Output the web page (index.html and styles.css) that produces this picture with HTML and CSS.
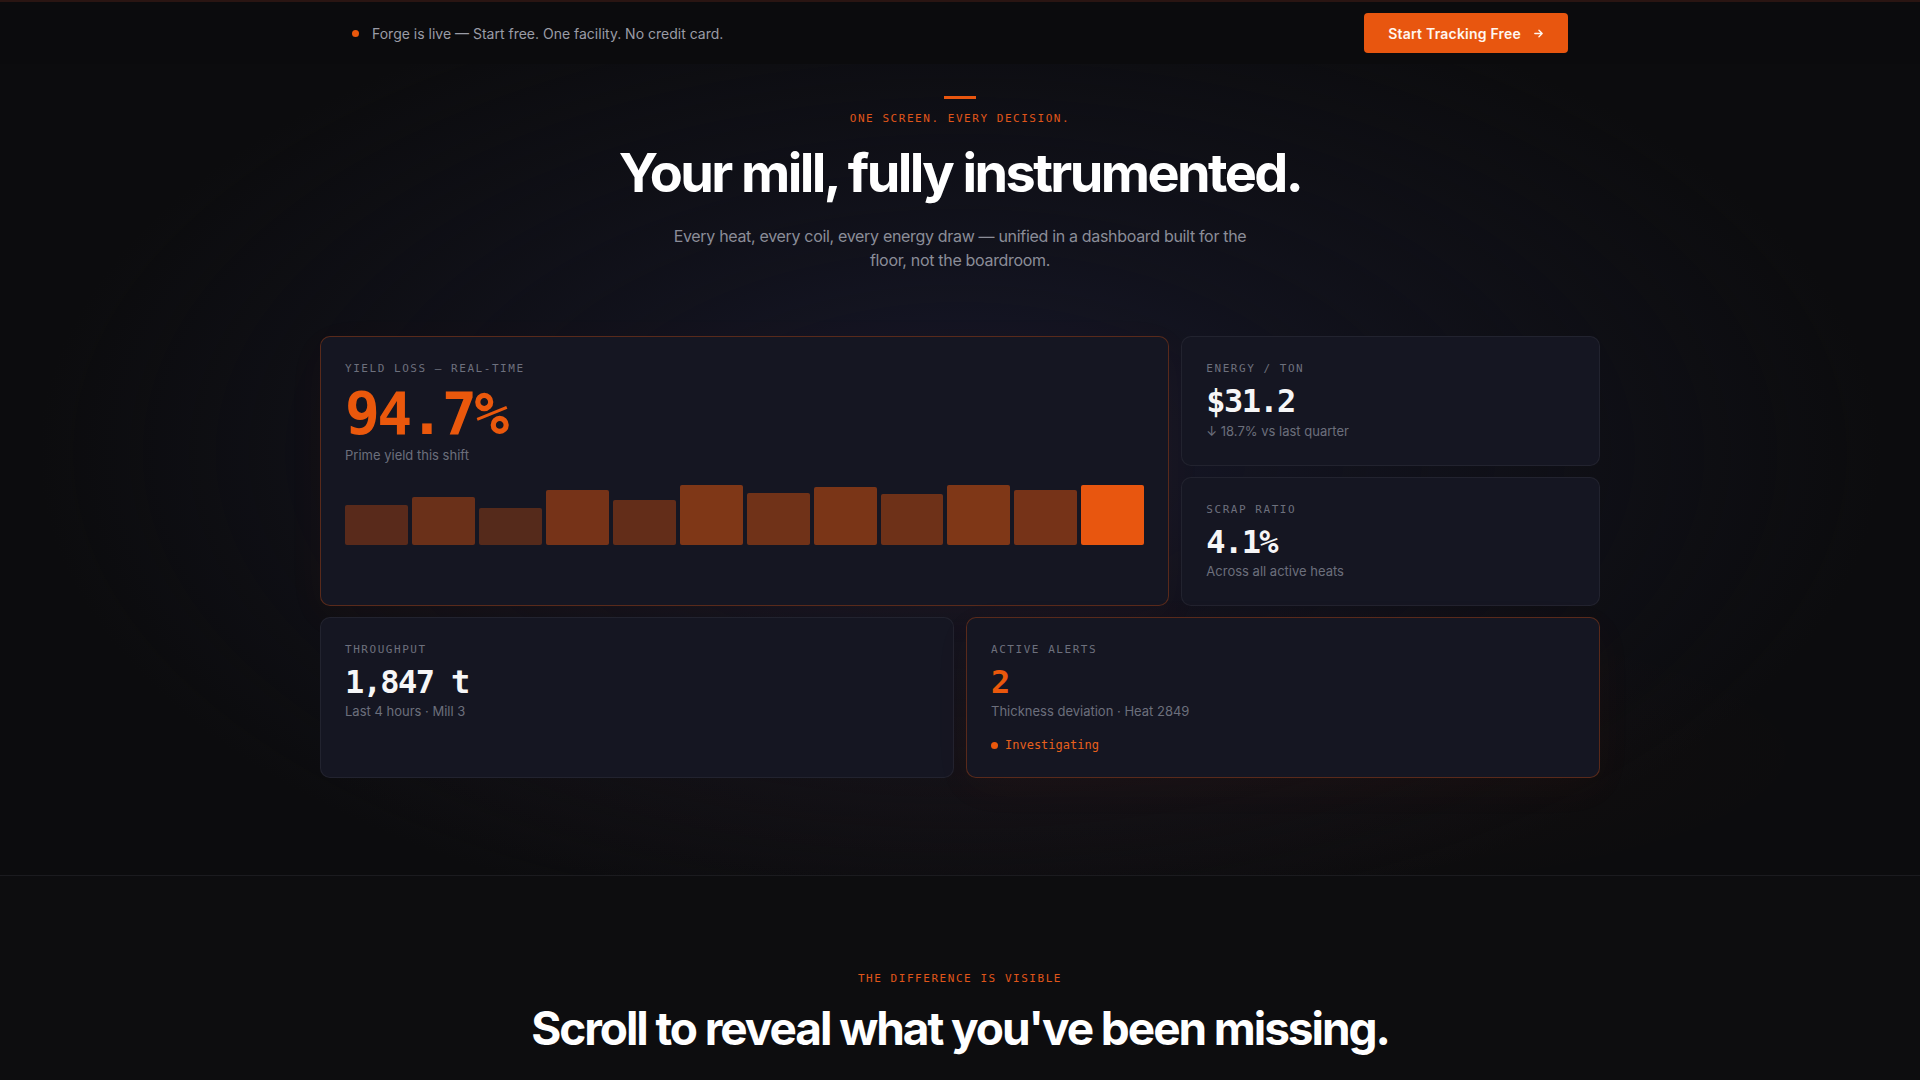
FILE: index.html
```html
<!DOCTYPE html>
<html lang="en">
<head>
  <meta charset="UTF-8">
  <meta name="viewport" content="width=device-width, initial-scale=1.0">
  <title>Forge — Your mill, fully instrumented</title>
  <link rel="stylesheet" href="styles.css">
</head>
<body>

<header class="topbar">
  <div class="wrap topbar-inner">
    <p class="notice"><span class="dot"></span>Forge is live — Start free. One facility. No credit card.</p>
    <a class="cta" href="#">Start Tracking Free
      <svg width="11" height="11" viewBox="0 0 12 12" fill="none" stroke="currentColor" stroke-width="1.5" stroke-linecap="round" stroke-linejoin="round"><path d="M2 6h8M6.5 2.5L10 6l-3.5 3.5"/></svg>
    </a>
  </div>
</header>

<section class="hero">
  <div class="wrap">
    <div class="hero-head">
      <span class="rule"></span>
      <p class="eyebrow">ONE SCREEN. EVERY DECISION.</p>
      <h1>Your mill, fully instrumented.</h1>
      <p class="lede">Every heat, every coil, every energy draw — unified in a dashboard built for the floor, not the boardroom.</p>
    </div>

    <div class="board">
      <article class="card card-main accent">
        <p class="label">YIELD LOSS — REAL-TIME</p>
        <p class="value value-xl hot">94.7%</p>
        <p class="sub">Prime yield this shift</p>
        <div class="bars">
          <span class="b" style="height:67%;opacity:.32"></span>
          <span class="b" style="height:80%;opacity:.4"></span>
          <span class="b" style="height:62%;opacity:.3"></span>
          <span class="b" style="height:93%;opacity:.46"></span>
          <span class="b" style="height:75%;opacity:.37"></span>
          <span class="b" style="height:100%;opacity:.5"></span>
          <span class="b" style="height:87%;opacity:.43"></span>
          <span class="b" style="height:97%;opacity:.48"></span>
          <span class="b" style="height:85%;opacity:.42"></span>
          <span class="b" style="height:100%;opacity:.5"></span>
          <span class="b" style="height:93%;opacity:.46"></span>
          <span class="b now" style="height:100%"></span>
        </div>
      </article>

      <article class="card card-side">
        <p class="label">ENERGY / TON</p>
        <p class="value">$31.2</p>
        <p class="sub">↓ 18.7% vs last quarter</p>
      </article>

      <article class="card card-side">
        <p class="label">SCRAP RATIO</p>
        <p class="value">4.1%</p>
        <p class="sub">Across all active heats</p>
      </article>

      <article class="card card-half">
        <p class="label">THROUGHPUT</p>
        <p class="value">1,847 t</p>
        <p class="sub">Last 4 hours · Mill 3</p>
      </article>

      <article class="card card-half accent">
        <p class="label">ACTIVE ALERTS</p>
        <p class="value hot">2</p>
        <p class="sub">Thickness deviation · Heat 2849</p>
        <p class="status"><span class="dot"></span>Investigating</p>
      </article>
    </div>
  </div>
</section>

<section class="reveal">
  <div class="wrap">
    <p class="eyebrow">THE DIFFERENCE IS VISIBLE</p>
    <h2>Scroll to reveal what you've been missing.</h2>
  </div>
</section>

</body>
</html>
```

FILE: styles.css
```css
*, *:before, *:after {
  box-sizing: border-box;
}

body {
  margin: 0;
  padding: 0;
  background: #0c0c0e;
  color: #f4f4f5;
  font-family: 'Inter', 'Liberation Sans', sans-serif;
  overflow: hidden;
}

p, h1, h2 {
  margin: 0;
}

.wrap {
  max-width: 1280px;
  margin: 0 auto;
}

/* announcement strip */

.topbar {
  border-top: 2px solid #2a1512;
  background: #0b0b0d;
  padding: 11px 0;
}

.topbar-inner {
  display: flex;
  align-items: center;
  justify-content: space-between;
  padding: 0 32px;
}

.notice {
  display: flex;
  align-items: center;
  gap: 13px;
  font-size: 14px;
  color: #9a9ca6;
}

.dot {
  display: inline-block;
  width: 7px;
  height: 7px;
  border-radius: 50%;
  background: #ea580c;
}

.cta {
  display: inline-flex;
  align-items: center;
  gap: 12px;
  height: 40px;
  padding: 0 24px;
  border-radius: 4px;
  background: #e8560f;
  color: #fff7f0;
  font-size: 14px;
  font-weight: 600;
  letter-spacing: 0.015em;
  text-decoration: none;
}

/* hero */

.hero {
  padding: 32px 0 97px;
  background:
    radial-gradient(ellipse 48% 60% at 50% 48%, rgba(24, 25, 44, 0.95) 0%, rgba(20, 21, 36, 0.6) 45%, rgba(12, 12, 14, 0) 100%),
    radial-gradient(ellipse 40% 20% at 55% 85%, rgba(234, 88, 12, 0.04) 0%, rgba(234, 88, 12, 0) 100%),
    #0c0c0e;
}

.hero-head {
  display: flex;
  flex-direction: column;
  align-items: center;
  text-align: center;
}

.rule {
  width: 32px;
  height: 3px;
  background: #e8560f;
  margin-bottom: 12px;
}

.eyebrow {
  font-family: 'DejaVu Sans Mono', 'Liberation Mono', monospace;
  font-size: 11px;
  line-height: 16px;
  letter-spacing: 0.14em;
  color: #e0561a;
}

h1 {
  margin-top: 16px;
  font-size: 54px;
  line-height: 1.1;
  font-weight: 700;
  letter-spacing: -0.048em;
  color: #ffffff;
}

.lede {
  margin-top: 22px;
  max-width: 600px;
  font-size: 16px;
  line-height: 24px;
  letter-spacing: -0.02em;
  color: #8b8d98;
}

/* metric cards */

.board {
  margin-top: 64px;
  display: grid;
  grid-template-columns: repeat(6, 1fr);
  gap: 11px 12px;
}

.card {
  background: #151622;
  border: 1px solid rgba(255, 255, 255, 0.06);
  border-radius: 10px;
  padding: 24px;
}

.card.accent {
  border-color: rgba(234, 88, 12, 0.32);
  box-shadow: 0 10px 40px rgba(234, 88, 12, 0.04);
}

.card-main {
  grid-column: span 4;
  grid-row: span 2;
}

.card-side {
  grid-column: span 2;
}

.card-half {
  grid-column: span 3;
}

.label {
  font-family: 'DejaVu Sans Mono', 'Liberation Mono', monospace;
  font-size: 11px;
  line-height: 16px;
  letter-spacing: 0.14em;
  color: #6d707d;
  margin-bottom: 8px;
}

.value {
  font-family: 'DejaVu Sans Mono', 'Liberation Mono', monospace;
  font-size: 32px;
  line-height: 1.04;
  font-weight: 700;
  letter-spacing: -0.05em;
  color: #f6f6f7;
  margin-bottom: 2px;
}

.value-xl {
  font-size: 58px;
  line-height: 1;
  letter-spacing: -0.045em;
}

.hot {
  color: #ea580c;
}

.sub {
  font-size: 13px;
  line-height: 20px;
  color: #6c6f7c;
}

.bars {
  display: flex;
  align-items: flex-end;
  gap: 4px;
  height: 60px;
  margin-top: 20px;
}

.b {
  flex: 1;
  border-radius: 2px;
  background: #ea580c;
}

.b.now {
  background: #e8560f;
}

.status {
  margin-top: 16px;
  display: flex;
  align-items: center;
  gap: 7px;
  font-family: 'DejaVu Sans Mono', 'Liberation Mono', monospace;
  font-size: 12px;
  line-height: 16px;
  color: #e8601c;
}

/* next section */

.reveal {
  border-top: 1px solid #1b1b1f;
  background: #0d0d0f;
  padding: 95px 0 80px;
  text-align: center;
}

h2 {
  margin-top: 16px;
  font-size: 46px;
  line-height: 1.1;
  font-weight: 700;
  letter-spacing: -0.045em;
  color: #ffffff;
}
```
